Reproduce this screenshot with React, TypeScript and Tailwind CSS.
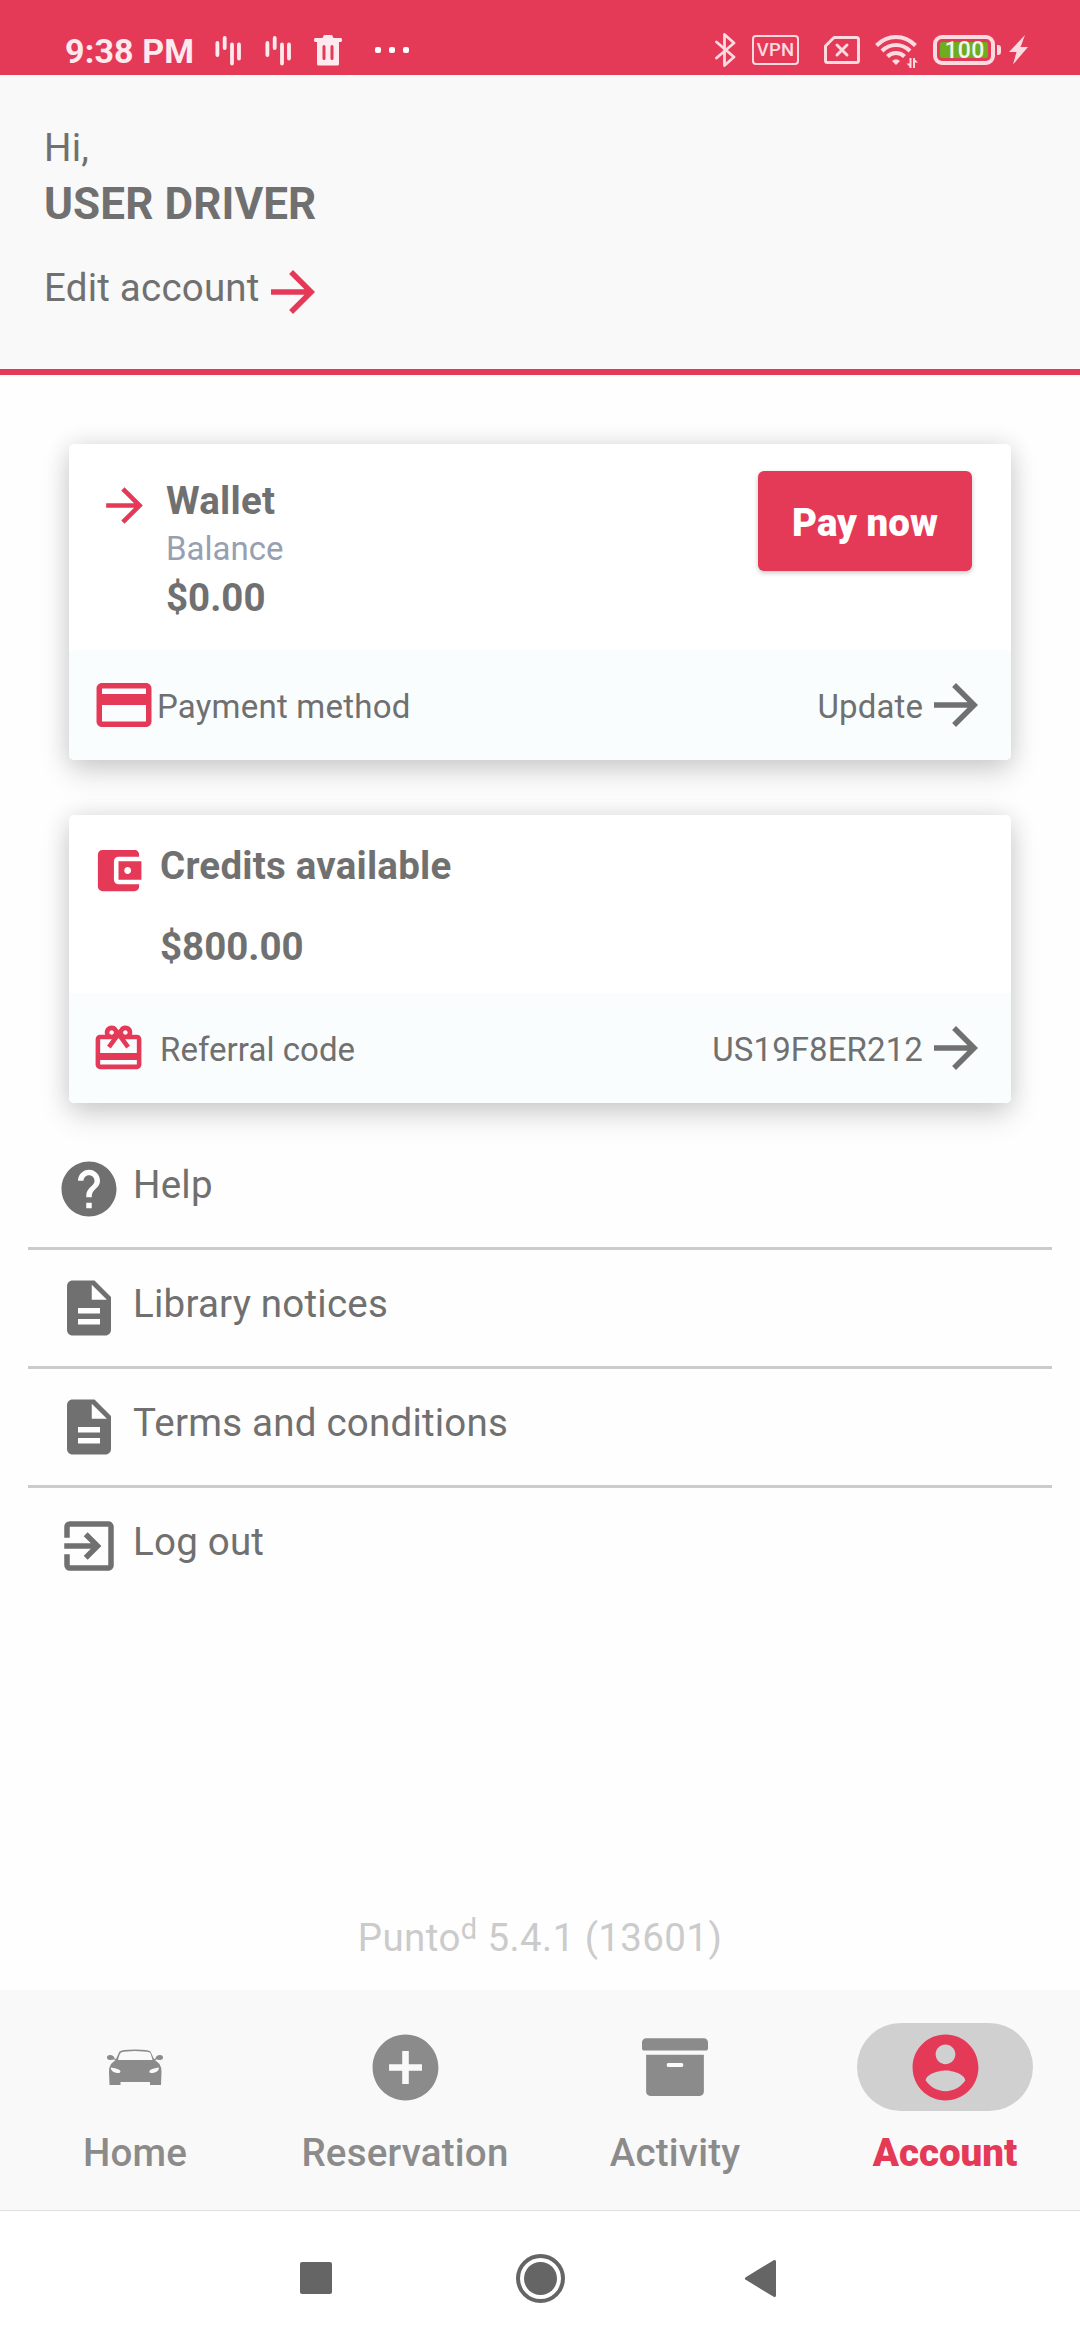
import type { ReactNode } from "react";
import {
  MdAccountBalanceWallet,
  MdAddCircle,
  MdArrowForward,
  MdCardGiftcard,
  MdCreditCard,
  MdDescription,
  MdExitToApp,
  MdHelp,
} from "react-icons/md";
import { FaArchive } from "react-icons/fa";

function NotificationBars() {
  return (
    <svg className="h-[32px] w-[27px]" viewBox="0 0 27 32" stroke="currentColor" strokeWidth="3.8" strokeLinecap="round">
      <path d="M2.4 8v12M9.700 3v10M17 9.500v19M24 9.500v14" />
    </svg>
  );
}

function StatusBar() {
  return (
    <div className="flex h-[75px] items-start bg-[#e53958] text-[#fdeaee]">
      <div className="mt-[31px] ml-[65px] w-[150px] text-[34px] leading-[40px] font-bold tracking-[0.15px] whitespace-nowrap">9:38 PM</div>
      <div className="mt-[35px] w-[50px]">
        <NotificationBars />
      </div>
      <div className="mt-[35px] w-[49px]">
        <NotificationBars />
      </div>
      <svg className="mt-[35px] h-[31px] w-[28px]" viewBox="0 0 28 31" fill="currentColor">
        <path
          fillRule="evenodd"
          d="M10 0h8l1.500 3H27q1 0 1 2t-1 2h-2v22q0 1.500-1.500 1.500h-19Q3 30.500 3 29V7H1Q0 7 0 5t1-2h7.500zM10 10q-1.500 0-1.500 1.500v12q0 1.500 1.500 1.500t1.500-1.500v-12Q11.500 10 10 10zM18 10q-1.500 0-1.500 1.500v12q0 1.500 1.500 1.500t1.500-1.500v-12Q19.500 10 18 10z"
        />
      </svg>
      <div className="mt-[47px] ml-[33px] flex w-[34px] justify-between">
        <i className="size-[6px] rounded-[2px] bg-white" />
        <i className="size-[6px] rounded-[2px] bg-white" />
        <i className="size-[6px] rounded-[2px] bg-white" />
      </div>
      <div className="ml-auto flex items-start pr-[52px] text-[#fbdae0]">
        <svg className="mt-[33px] h-[34px] w-[21px]" viewBox="0 0 21 34" fill="none" stroke="currentColor" strokeWidth="2.800" strokeLinejoin="round" strokeLinecap="round">
          <path d="M1.500 9l17.500 15-9.500 8.500v-31L19 10 1.500 25" />
        </svg>
        <div className="mt-[35px] ml-[16px] flex h-[30px] w-[47px] items-center justify-center rounded-[4px] border-2 border-[#fbdae0] text-[18.5px] leading-none font-medium">
          VPN
        </div>
        <svg className="mt-[36px] ml-[25px] h-[28px] w-[36px]" viewBox="0 0 36 28" fill="none" stroke="currentColor" strokeWidth="3">
          <path d="M10 1.500h22.500q2 0 2 2v21q0 2-2 2h-29q-2 0-2-2V10z" strokeLinejoin="round" />
          <path d="M13 9l10 10M23 9L13 19" strokeLinecap="round" />
        </svg>
        <svg className="mt-[35px] ml-[15px] h-[33px] w-[43px]" viewBox="0 0 43 33" fill="none" stroke="currentColor" strokeWidth="4">
          <path d="M1.500 10.500Q10 2 21 2t19.500 8.500M7 16q6-6 14-6t14 6M12.500 21.500Q16 18 21 18t8.500 3.500" />
          <path d="M17 26q4-3.500 8 0l-4 4z" fill="currentColor" stroke="none" />
          <path d="M35.500 23v10M39 23v10" strokeWidth="2" />
          <path d="M36 33l-4.500-4.500H36zM38.500 23l4.500 4.500h-4.500z" fill="currentColor" stroke="none" />
        </svg>
        <div className="mt-[35px] ml-[15px] flex h-[30px] w-[62px] items-center justify-center rounded-[9px] border-4 border-[#fbdae0]">
          <div className="flex h-[16px] w-[48px] items-center justify-center rounded-[2px] bg-[#6fac20] pt-px pl-px text-[23px] leading-none font-medium text-[#f4f8e9]">
            100
          </div>
        </div>
        <div className="mt-[45px] ml-[2px] h-[10px] w-[4px] rounded-r-[3px] bg-[#fbdae0]" />
        <svg className="mt-[35px] ml-[8px] h-[30px] w-[19px]" viewBox="0 0 19 30" fill="currentColor">
          <path d="M16 0L0 17h7.500L4 29.500 19 12h-7.500z" />
        </svg>
      </div>
    </div>
  );
}

function Header() {
  return (
    <header className="h-[300px] border-b-[6px] border-[#e53958] bg-[#f9f9f9] pt-[47px] pl-[44px]">
      <div className="leading-[52px]">Hi,</div>
      <h1 className="mt-[4px] text-[44px] leading-[52px] font-bold tracking-[0.1px]">USER DRIVER</h1>
      <div className="mt-[29px] flex h-[66px] items-start">
        <span className="mt-[3px] w-[216px] leading-[52px] whitespace-nowrap">Edit account</span>
        <MdArrowForward className="size-[66px] text-[#e53958]" />
      </div>
    </header>
  );
}

const CARD =
  "w-[942px] overflow-hidden rounded-[5px] bg-white shadow-[0_12px_30px_rgba(0,0,0,0.16),0_0_24px_rgba(0,0,0,0.10)]";

function CardFooter({ children, value }: { children: ReactNode; value: string }) {
  return (
    <div className="flex h-[110px] items-center bg-[#f9fdfe] pr-[22px] pl-[22px] text-[33px]">
      {children}
      <span className="mt-[4px] ml-auto tracking-[0.1px]">{value}</span>
      <MdArrowForward className="size-[66px]" />
    </div>
  );
}

function WalletCard() {
  return (
    <section className={CARD}>
      <div className="flex h-[206px] items-start pr-[39px] pl-[28px]">
        <MdArrowForward className="mt-[34px] size-[55px] text-[#e53958]" />
        <div className="mt-[34px] ml-[14px] flex-1">
          <div className="leading-[45px] font-bold">Wallet</div>
          <div className="mt-[6px] text-[33px] leading-[39px] tracking-normal text-[#97a0b1]">Balance</div>
          <div className="mt-[7px] leading-[45px] font-bold tracking-normal">$0.00</div>
        </div>
        <button className="mt-[27px] h-[100px] w-[214px] rounded-[6px] bg-[#e53958] pt-[3px] font-black tracking-normal text-white shadow-[0_2px_5px_rgba(0,0,0,0.22)]">
          Pay now
        </button>
      </div>
      <CardFooter value="Update">
        <MdCreditCard className="size-[66px] text-[#e53958]" />
        <span className="mt-[4px]">Payment method</span>
      </CardFooter>
    </section>
  );
}

function CreditsCard() {
  return (
    <section className={CARD}>
      <div className="flex h-[178px] items-start pl-[22px]">
        <MdAccountBalanceWallet className="mt-[28px] size-[55px] text-[#e53958]" />
        <div className="mt-[28px] ml-[14px] font-bold">
          <div className="leading-[45px]">Credits available</div>
          <div className="mt-[36px] leading-[45px] tracking-normal">$800.00</div>
        </div>
      </div>
      <CardFooter value="US19F8ER212">
        <MdCardGiftcard className="size-[55px] text-[#e53958]" />
        <span className="mt-[4px] ml-[14px] tracking-[0.05px]">Referral code</span>
      </CardFooter>
    </section>
  );
}

const MENU = [
  { label: "Help", Icon: MdHelp },
  { label: "Library notices", Icon: MdDescription },
  { label: "Terms and conditions", Icon: MdDescription },
  { label: "Log out", Icon: MdExitToApp },
];

function Menu() {
  return (
    <ul className="mt-[28px] px-[28px]">
      {MENU.map(({ label, Icon }) => (
        <li key={label} className="flex h-[119px] items-center border-b-[3px] border-[#cbcbcb] pl-[28px] last:border-transparent">
          <Icon className="size-[66px]" />
          <span className="ml-[11px] pb-[8px] leading-[46px]">{label}</span>
        </li>
      ))}
    </ul>
  );
}

function CarIcon() {
  return (
    <svg className="h-[36px] w-[56px]" viewBox="0 0 56 36" fill="currentColor">
      <path
        fillRule="evenodd"
        d="M12.500 2.500Q14 .5 28 .5t15.500 2l3.500 7.500 1.500-.5Q49 6 53 6q3 .3 3 2.500T53 11l-3.500-.5-1.500.5 4.500 4Q54.500 18 54.500 23L54 36H43v-3H13.500v3H2.500L2 23q0-5 2-8l4.500-4-1.500-.5-4 .5Q0 10.800 0 8.500T3 6q4 0 4.500 3.500l1.500.5zM14 3.500q-2 2-3 7.500h34.500Q44 5 43 3.500 37 2 28 2t-14 1.500zM3.800 18.500q0 3.500 4.200 5 5.500 1.500 5.500-1 0-2.500-9.700-4zM52 18.500q0 3.500-4.200 5-5.500 1.500-5.500-1 0-2.500 9.700-4z"
      />
    </svg>
  );
}

function AccountIcon() {
  return (
    <svg className="size-[79px]" viewBox="0 0 24 24" fill="currentColor">
      <path d="M12 2C6.480 2 2 6.480 2 12s4.480 10 10 10 10-4.480 10-10S17.520 2 12 2zm0 3c1.660 0 3 1.340 3 3s-1.340 3-3 3-3-1.340-3-3 1.340-3 3-3zm0 14.200c-2.500 0-4.710-1.280-6-3.220.03-1.990 4-3.080 6-3.080 1.990 0 5.970 1.090 6 3.080-1.290 1.940-3.500 3.220-6 3.220z" />
    </svg>
  );
}

function TabItem({ label, active = false, children }: { label: string; active?: boolean; children: ReactNode }) {
  return (
    <div className={active ? "flex flex-col items-center font-black tracking-normal text-[#e53958]" : "flex flex-col items-center font-medium text-[#8b8b8b]"}>
      <div className={active ? "mt-[33px] flex h-[88px] w-[176px] items-center justify-center rounded-full bg-[#d0d0d0]" : "mt-[33px] flex h-[88px] w-[176px] items-center justify-center"}>
        {children}
      </div>
      <span className="mt-[19px] leading-[46px]">{label}</span>
    </div>
  );
}

function TabBar() {
  return (
    <nav className="grid h-[221px] grid-cols-4 border-b border-[#e0e0e0] bg-[#f9f9f9]">
      <TabItem label="Home">
        <CarIcon />
      </TabItem>
      <TabItem label="Reservation">
        <MdAddCircle className="size-[79px]" />
      </TabItem>
      <TabItem label="Activity">
        <FaArchive className="size-[66px]" />
      </TabItem>
      <TabItem label="Account" active>
        <AccountIcon />
      </TabItem>
    </nav>
  );
}

function SystemBar() {
  return (
    <div className="flex h-[129px] items-center bg-white pt-[5px] pl-[300px] text-[#656565]">
      <div className="size-[32px] rounded-[2px] bg-current" />
      <div className="ml-[184px] flex size-[49px] items-center justify-center rounded-full border-4 border-current">
        <div className="size-[33px] rounded-full bg-current" />
      </div>
      <svg className="ml-[180px] h-[37px] w-[31px]" viewBox="0 0 31 37" fill="currentColor" stroke="currentColor" strokeWidth="3" strokeLinejoin="round">
        <path d="M29.500 1.500v34L1.500 18.500z" />
      </svg>
    </div>
  );
}

export default function App() {
  return (
    <div className="flex h-[2340px] w-[1080px] flex-col bg-[#fefefe] font-['Roboto',sans-serif] text-[38.5px] tracking-[0.22px] text-[#707070]">
      <StatusBar />
      <Header />
      <main className="flex flex-1 flex-col">
        <div className="flex flex-col items-center gap-[55px] pt-[69px]">
          <WalletCard />
          <CreditsCard />
        </div>
        <Menu />
        <p className="mt-auto mb-[29px] text-center leading-[46px] tracking-[0.4px] text-[#cbcbcb]">
          Punto<span className="relative top-[-12px] text-[29px] leading-none">d</span> 5.4.1 (13601)
        </p>
      </main>
      <TabBar />
      <SystemBar />
    </div>
  );
}
